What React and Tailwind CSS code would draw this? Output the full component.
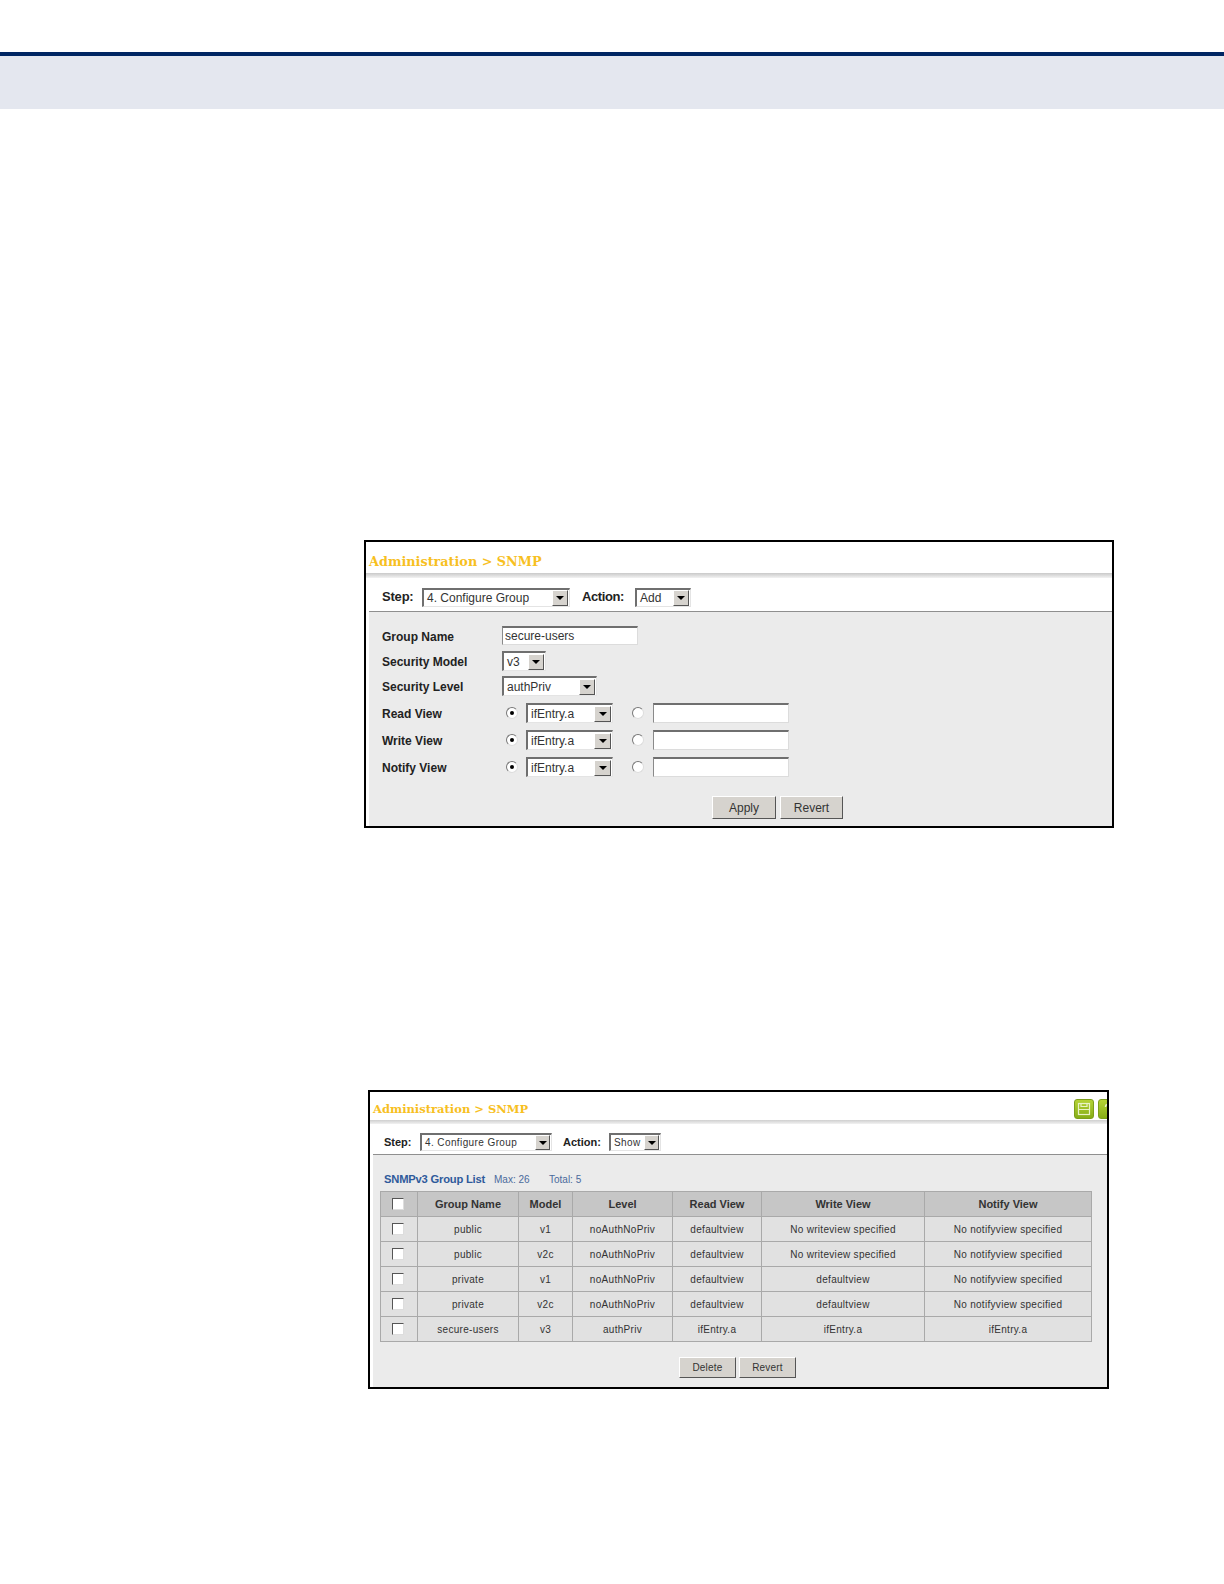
const sans = "font-['Liberation_Sans',Arial,sans-serif]";

const Select = ({ value, className, text = "text-[12px]", arrow = "w-[16px]" }) => (
  <div className={`flex items-center justify-between bg-white border-t-2 border-l-2 border-t-[#6f6f6f] border-l-[#6f6f6f] border-b border-r border-b-[#e4e4e4] border-r-[#e4e4e4] pl-[3px] pr-[1px] font-normal ${text} text-[#333] ${className}`}>
    <span className="whitespace-nowrap">{value}</span>
    <span className={`flex items-center justify-center h-full max-h-[16px] ${arrow} bg-[#d6d3ce] border-r border-b border-[#555] border-t border-t-white border-l border-l-white`}>
      <span className="w-0 h-0 border-x-[4px] border-x-transparent border-t-[4px] border-t-black" />
    </span>
  </div>
);

const TextBox = ({ value, className }) => (
  <div className={`flex items-center bg-white border-t-2 border-l border-t-[#6f6f6f] border-l-[#8a8a8a] border-b border-r border-b-[#dcdcdc] border-r-[#dcdcdc] pl-[2px] text-[12px] text-[#333] ${className}`}>
    {value}
  </div>
);

const Radio = ({ on }) => (
  <div className="flex items-center justify-center w-[12px] h-[12px] rounded-full bg-white border border-t-[#777] border-l-[#777] border-b-[#ddd] border-r-[#ddd]">
    {on && <div className="w-[4px] h-[4px] rounded-full bg-black" />}
  </div>
);

const Check = () => (
  <div className="w-[12px] h-[12px] bg-white border border-t-[#555] border-l-[#555] border-b-[#ddd] border-r-[#ddd] mx-auto" />
);

const Btn = ({ label, className }) => (
  <div className={`flex items-center justify-center bg-[#d6d3ce] border border-t-white border-l-white border-b-[#555] border-r-[#555] text-[#333] ${className}`}>
    {label}
  </div>
);

const Title = ({ size }) => (
  <div className={`font-['DejaVu_Serif',serif] font-bold text-[#f7c01f] whitespace-nowrap ${size}`}>
    Administration &gt; SNMP
  </div>
);

const viewRows = ["Read View", "Write View", "Notify View"];

const ConfigPanel = () => (
  <div className={`ml-[364px] mt-[431px] w-[750px] h-[288px] border-2 border-black bg-white flex flex-col overflow-hidden ${sans}`}>
    <div className="h-[31px] flex items-end pl-[3px] pb-[2px]">
      <Title size="text-[12.8px]" />
    </div>
    <div className="h-[5px] bg-gradient-to-b from-[#c9c9c9] to-[#f2f2f2]" />
    <div className="ml-[3px] h-[34px] flex items-center pl-[13px] pt-[5px] text-[13px] font-bold text-[#222] border-b border-[#8f8f8f]">
      <span className="w-[40px] tracking-[-0.2px]">Step:</span>
      <Select value="4. Configure Group" className="w-[148px] h-[19px]" />
      <span className="ml-[12px] w-[53px] tracking-[-0.4px]">Action:</span>
      <Select value="Add" className="w-[56px] h-[19px]" />
    </div>
    <div className="ml-[3px] flex-1 bg-[#ebebeb] text-[12px] font-bold text-[#222] pl-[13px] flex flex-col">
      <div className="h-[19px] mt-[14px] flex items-center">
        <span className="w-[120px] pt-[3px]">Group Name</span>
        <TextBox value="secure-users" className="w-[136px] h-[19px] font-normal" />
      </div>
      <div className="h-[20px] mt-[6px] flex items-center">
        <span className="w-[120px] pt-[2px]">Security Model</span>
        <Select value="v3" className="w-[44px] h-[20px]" />
      </div>
      <div className="h-[20px] mt-[5px] flex items-center">
        <span className="w-[120px] pt-[2px]">Security Level</span>
        <Select value="authPriv" className="w-[95px] h-[20px]" />
      </div>
      <div className="mt-[7px] flex flex-col gap-[7px]">
        {viewRows.map((label) => (
          <div key={label} className="h-[20px] flex items-center">
            <span className="w-[124px] pt-[2px]">{label}</span>
            <Radio on />
            <Select value="ifEntry.a" className="w-[87px] h-[20px] ml-[8px]" arrow="w-[17px]" />
            <span className="ml-[19px]"><Radio /></span>
            <TextBox className="w-[136px] h-[20px] ml-[9px]" />
          </div>
        ))}
      </div>
      <div className="mt-[19px] ml-[330px] flex gap-[4px] font-normal text-[12px]">
        <Btn label="Apply" className="w-[64px] h-[23px]" />
        <Btn label="Revert" className="w-[63px] h-[23px]" />
      </div>
    </div>
  </div>
);

const columns = [
  { label: "Group Name", w: "w-[101px]" },
  { label: "Model", w: "w-[54px]" },
  { label: "Level", w: "w-[100px]" },
  { label: "Read View", w: "w-[89px]" },
  { label: "Write View", w: "w-[163px]" },
  { label: "Notify View", w: "flex-1" },
];

const rows = [
  ["public", "v1", "noAuthNoPriv", "defaultview", "No writeview specified", "No notifyview specified"],
  ["public", "v2c", "noAuthNoPriv", "defaultview", "No writeview specified", "No notifyview specified"],
  ["private", "v1", "noAuthNoPriv", "defaultview", "defaultview", "No notifyview specified"],
  ["private", "v2c", "noAuthNoPriv", "defaultview", "defaultview", "No notifyview specified"],
  ["secure-users", "v3", "authPriv", "ifEntry.a", "ifEntry.a", "ifEntry.a"],
];

const GreenIcon = ({ children }) => (
  <div className="shrink-0 w-[20px] h-[20px] rounded-[3px] bg-gradient-to-b from-[#b5d334] to-[#86ad16] border border-[#7d9f1a] flex items-center justify-center">
    {children}
  </div>
);

const ListPanel = () => (
  <div className={`ml-[368px] mt-[262px] w-[741px] h-[299px] border-2 border-black bg-white flex flex-col overflow-hidden ${sans}`}>
    <div className="h-[28px] flex items-center justify-between pl-[3px]">
      <div className="pt-[8px]"><Title size="text-[11.5px]" /></div>
      <div className="flex gap-[4px] pt-[6px] mr-[-11px]">
        <GreenIcon>
          <svg width="14" height="14" viewBox="0 0 14 14" fill="none" stroke="#e9f2c4" strokeWidth="1.2">
            <rect x="1.5" y="1.5" width="11" height="11" />
            <path d="M4 1.5v3h6v-3M1.5 7.5h11" />
          </svg>
        </GreenIcon>
        <GreenIcon>
          <svg width="14" height="14" viewBox="0 0 14 14" fill="none" stroke="#e9f2c4" strokeWidth="1.6">
            <path d="M4.5 5a2.5 2.5 0 1 1 3.5 2.3c-.7.4-1 .9-1 1.7M7 11v1" />
          </svg>
        </GreenIcon>
      </div>
    </div>
    <div className="h-[4px] bg-gradient-to-b from-[#cfcfcf] to-[#f2f2f2]" />
    <div className="ml-[3px] h-[31px] flex items-center pl-[11px] pt-[6px] text-[11px] font-bold text-[#222] border-b border-[#8f8f8f]">
      <span className="w-[36px]">Step:</span>
      <Select value="4. Configure Group" text="text-[10px] tracking-[0.4px]" className="w-[132px] h-[18px]" arrow="w-[15px]" />
      <span className="ml-[11px] w-[46px]">Action:</span>
      <Select value="Show" text="text-[10px] tracking-[0.4px]" className="w-[52px] h-[18px]" arrow="w-[15px]" />
    </div>
    <div className="ml-[3px] flex-1 bg-[#ebebeb] flex flex-col">
      <div className="h-[36px] pl-[11px] pt-[13px] flex items-center text-[10px] text-[#4a6a9c] whitespace-nowrap">
        <span className="text-[11.2px] font-bold text-[#2f5a9b] tracking-[-0.2px] w-[110px]">SNMPv3 Group List</span>
        <span className="w-[55px]">Max: 26</span>
        <span>Total: 5</span>
      </div>
      <div className="ml-[7px] mr-[15px] border border-b-0 border-[#a9a9a9] text-[10px] text-[#333]">
        <div className="h-[25px] flex bg-[#c6c6c6] text-[11px] font-bold border-b border-[#a9a9a9]">
          <div className="w-[36px] pr-[2px] flex items-center"><Check /></div>
          {columns.map((c) => (
            <div key={c.label} className={`${c.w} flex items-center justify-center border-l border-[#a9a9a9]`}>{c.label}</div>
          ))}
        </div>
        {rows.map((row, i) => (
          <div key={i} className="h-[25px] flex bg-[#e1e1e1] border-b border-[#a9a9a9] tracking-[0.3px]">
            <div className="w-[36px] pr-[2px] flex items-center"><Check /></div>
            {row.map((cell, j) => (
              <div key={j} className={`${columns[j].w} flex items-center justify-center border-l border-[#a9a9a9]`}>{cell}</div>
            ))}
          </div>
        ))}
      </div>
      <div className="mt-[15px] ml-[306px] flex gap-[3px] text-[10px] tracking-[0.2px]">
        <Btn label="Delete" className="w-[57px] h-[21px]" />
        <Btn label="Revert" className="w-[57px] h-[21px]" />
      </div>
    </div>
  </div>
);

export default function App() {
  return (
    <div className="w-[1224px] h-[1584px] bg-white overflow-hidden pt-[52px]">
      <div className="h-[4px] bg-[#002663]" />
      <div className="h-[53px] bg-[#e4e7ef]" />
      <ConfigPanel />
      <ListPanel />
    </div>
  );
}
